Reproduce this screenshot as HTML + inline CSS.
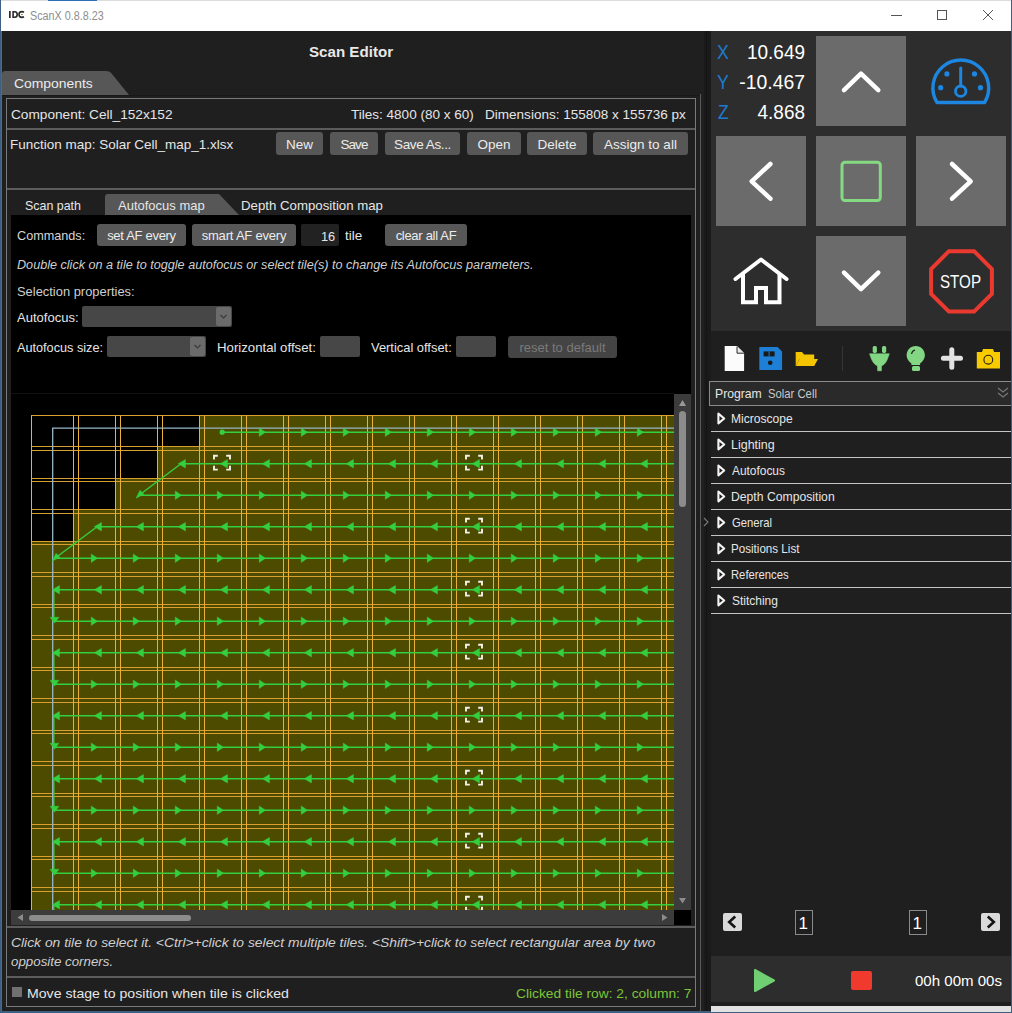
<!DOCTYPE html>
<html><head><meta charset="utf-8">
<style>
*{box-sizing:border-box;margin:0;padding:0}
html,body{width:1012px;height:1013px;overflow:hidden;background:#1f1f1f;font-family:"Liberation Sans",sans-serif;color:#e6e6e6}
.a{position:absolute}
.t{position:absolute;white-space:nowrap;line-height:1}
.btn{position:absolute;background:#575757;border-radius:3px;color:#ececec;font-size:13.5px;text-align:center;white-space:nowrap;padding-top:1px}
</style></head><body>
<!-- window frame -->
<div class="a" style="left:0;top:0;width:1012px;height:31px;background:#fff"></div>
<div class="a" style="left:0;top:0;width:1012px;height:1px;background:#dcdcdc"></div>
<div class="a" style="left:48px;top:0;width:49px;height:1px;background:#2f6fb8"></div>
<div class="a" style="left:0;top:0;width:1px;height:1013px;background:#3d5f80"></div>
<div class="a" style="left:1px;top:31px;width:1px;height:982px;background:#4a6b8a"></div>
<div class="a" style="left:1011px;top:0;width:1px;height:1013px;background:#3d5f80"></div>
<div class="a" style="left:0;top:1011px;width:1012px;height:2px;background:#3d5f80"></div>
<!-- title -->
<svg class="a" style="left:8px;top:9px" width="20" height="12" viewBox="8 9 20 12"><rect x="9" y="11" width="1.7" height="7" fill="#2a2a2a"/><path d="M13.1 11.8H14.8Q17.2 11.8 17.2 14.5Q17.2 17.2 14.8 17.2H13.1Z" fill="none" stroke="#2a2a2a" stroke-width="1.6"/><path d="M24 12.2Q23 11.6 22 11.6Q19 11.6 19 14.5Q19 17.4 22 17.4Q23 17.4 24 16.8" fill="none" stroke="#2a2a2a" stroke-width="1.6"/><path d="M21 14.5H23" stroke="#c08040" stroke-width="1"/></svg>
<div class="t" style="left:30.00px;top:9.7px;font-size:12px;color:#8e8e8e;transform:scaleX(0.8982);transform-origin:0 0">ScanX 0.8.8.23</div>
<div class="a" style="left:891px;top:15px;width:11px;height:1px;background:#555"></div>
<div class="a" style="left:937px;top:10px;width:10px;height:10px;border:1px solid #555"></div>
<svg class="a" style="left:982px;top:9px" width="12" height="12" viewBox="0 0 12 12"><path d="M1 1L11 11M11 1L1 11" stroke="#555" stroke-width="1"/></svg>

<!-- LEFT PANEL -->
<div class="t" style="left:309.00px;top:44px;font-size:15.5px;font-weight:bold;color:#e8e8e8;transform:scaleX(0.9757);transform-origin:0 0">Scan Editor</div>
<!-- components tab -->
<svg class="a" style="left:2px;top:71px" width="130" height="25" viewBox="0 0 130 25"><path d="M0 24V3Q0 0 3 0H104Q108 0 110 3L127 24z" fill="#575757"/></svg>
<div class="t" style="left:14.00px;top:77px;font-size:13.5px;color:#ececec;transform:scaleX(1.0287);transform-origin:0 0">Components</div>
<div class="a" style="left:2px;top:95px;width:699px;height:1px;background:#181818"></div>
<div class="a" style="left:700px;top:94px;width:1px;height:918px;background:#5a5a5a"></div>
<!-- outer box -->
<div class="a" style="left:6px;top:98px;width:690px;height:909px;border:1px solid #7a7a7a"></div>
<div class="a" style="left:7px;top:128px;width:688px;height:2px;background:#5c5c5c"></div>
<div class="a" style="left:7px;top:188px;width:688px;height:2px;background:#5c5c5c"></div>
<div class="a" style="left:7px;top:926px;width:688px;height:2px;background:#5c5c5c"></div>
<div class="a" style="left:7px;top:976px;width:688px;height:2px;background:#5c5c5c"></div>

<div class="t" style="left:11.00px;top:108px;font-size:13.5px;transform:scaleX(1.0104);transform-origin:0 0">Component: Cell_152x152</div>
<div class="t" style="left:351.00px;top:108px;font-size:13.5px;transform:scaleX(1.0017);transform-origin:0 0">Tiles: 4800 (80 x 60)&nbsp;&nbsp; Dimensions: 155808 x 155736 px</div>
<div class="t" style="left:10.00px;top:137.5px;font-size:13.5px;transform:scaleX(0.9984);transform-origin:0 0">Function map: Solar Cell_map_1.xlsx</div>
<div class="btn" style="left:276px;top:132px;width:47px;height:23px;line-height:23px">New</div>
<div class="btn" style="left:330px;top:132px;width:48px;height:23px;line-height:23px;letter-spacing:-0.9px">Save</div>
<div class="btn" style="left:385px;top:132px;width:75px;height:23px;line-height:23px;letter-spacing:-0.4px">Save As...</div>
<div class="btn" style="left:467px;top:132px;width:54px;height:23px;line-height:23px">Open</div>
<div class="btn" style="left:527px;top:132px;width:60px;height:23px;line-height:23px">Delete</div>
<div class="btn" style="left:593px;top:132px;width:95px;height:23px;line-height:23px">Assign to all</div>

<!-- inner tabs -->
<svg class="a" style="left:105px;top:194px" width="140" height="21" viewBox="0 0 140 21"><path d="M0 21V3Q0 0 3 0H114L134 21z" fill="#575757"/></svg>
<div class="t" style="left:24.50px;top:199px;font-size:13px;transform:scaleX(0.9552);transform-origin:0 0">Scan path</div>
<div class="t" style="left:117.80px;top:199px;font-size:13px;transform:scaleX(1.0002);transform-origin:0 0">Autofocus map</div>
<div class="t" style="left:240.88px;top:199px;font-size:13px;transform:scaleX(1.0179);transform-origin:0 0">Depth Composition map</div>
<!-- black content -->
<div class="a" style="left:11px;top:215px;width:680px;height:710px;background:#000"></div>
<div class="t" style="left:16.60px;top:229px;font-size:13px;color:#d6d6d6;transform:scaleX(0.9731);transform-origin:0 0">Commands:</div>
<div class="btn" style="left:97px;top:224px;width:89px;height:22px;line-height:22px;font-size:13px;letter-spacing:-0.3px">set AF every</div>
<div class="btn" style="left:192px;top:224px;width:104px;height:22px;line-height:22px;font-size:13px;letter-spacing:-0.2px">smart AF every</div>
<div class="a" style="left:301px;top:224px;width:38px;height:22px;background:#222;border-radius:2px"></div>
<div class="t" style="left:321.00px;top:230px;font-size:13px;transform:scaleX(0.9838);transform-origin:0 0">16</div>
<div class="t" style="left:345.00px;top:229px;font-size:13px;transform:scaleX(1.0373);transform-origin:0 0">tile</div>
<div class="btn" style="left:385px;top:224px;width:82px;height:22px;line-height:22px;font-size:13px;letter-spacing:-0.3px">clear all AF</div>
<div class="t" style="left:16.60px;top:259px;font-size:12.5px;font-style:italic;color:#cfcfcf;transform:scaleX(1.0094);transform-origin:0 0">Double click on a tile to toggle autofocus or select tile(s) to change its Autofocus parameters.</div>
<div class="t" style="left:16.60px;top:285px;font-size:13px;color:#cfcfcf;transform:scaleX(0.9924);transform-origin:0 0">Selection properties:</div>
<div class="t" style="left:16.60px;top:311px;font-size:13px;transform:scaleX(1.0014);transform-origin:0 0">Autofocus:</div>
<div class="a" style="left:82px;top:306px;width:150px;height:21px;background:#474747;border-radius:2px"></div>
<div class="a" style="left:216px;top:307px;width:15px;height:19px;background:#6b6b6b;border-radius:2px"></div>
<svg class="a" style="left:216px;top:307px" width="15" height="19"><path d="M4.5 8L7.5 11L10.5 8" fill="none" stroke="#3a3a3a" stroke-width="1.2"/></svg>
<div class="t" style="left:16.60px;top:341px;font-size:13px;transform:scaleX(0.9755);transform-origin:0 0">Autofocus size:</div>
<div class="a" style="left:107px;top:336px;width:99px;height:21px;background:#474747;border-radius:2px"></div>
<div class="a" style="left:190px;top:337px;width:15px;height:19px;background:#6b6b6b;border-radius:2px"></div>
<svg class="a" style="left:190px;top:337px" width="15" height="19"><path d="M4.5 8L7.5 11L10.5 8" fill="none" stroke="#3a3a3a" stroke-width="1.2"/></svg>
<div class="t" style="left:216.78px;top:341px;font-size:13px;transform:scaleX(1.0157);transform-origin:0 0">Horizontal offset:</div>
<div class="a" style="left:320px;top:336px;width:40px;height:21px;background:#474747;border-radius:2px"></div>
<div class="t" style="left:370.90px;top:341px;font-size:13px;transform:scaleX(0.9913);transform-origin:0 0">Vertical offset:</div>
<div class="a" style="left:456px;top:336px;width:40px;height:21px;background:#474747;border-radius:2px"></div>
<div class="btn" style="left:508px;top:336px;width:109px;height:22px;line-height:22px;font-size:13px;background:#444;color:#7a7a7a">reset to default</div>

<svg width="663" height="516" viewBox="11 394 663 516" style="position:absolute;left:11px;top:394px;display:block">
<rect x="11" y="394" width="663" height="516" fill="#000"/>
<rect x="199.0" y="415" width="48.0" height="36.0" fill="#4d4b00"/>
<rect x="241.0" y="415" width="48.0" height="36.0" fill="#4d4b00"/>
<rect x="283.0" y="415" width="48.0" height="36.0" fill="#4d4b00"/>
<rect x="325.0" y="415" width="48.0" height="36.0" fill="#4d4b00"/>
<rect x="367.0" y="415" width="48.0" height="36.0" fill="#4d4b00"/>
<rect x="409.0" y="415" width="48.0" height="36.0" fill="#4d4b00"/>
<rect x="451.0" y="415" width="48.0" height="36.0" fill="#4d4b00"/>
<rect x="493.0" y="415" width="48.0" height="36.0" fill="#4d4b00"/>
<rect x="535.0" y="415" width="48.0" height="36.0" fill="#4d4b00"/>
<rect x="577.0" y="415" width="48.0" height="36.0" fill="#4d4b00"/>
<rect x="619.0" y="415" width="48.0" height="36.0" fill="#4d4b00"/>
<rect x="661.0" y="415" width="48.0" height="36.0" fill="#4d4b00"/>
<rect x="157.0" y="446" width="48.0" height="36.0" fill="#4d4b00"/>
<rect x="199.0" y="446" width="48.0" height="36.0" fill="#4d4b00"/>
<rect x="241.0" y="446" width="48.0" height="36.0" fill="#4d4b00"/>
<rect x="283.0" y="446" width="48.0" height="36.0" fill="#4d4b00"/>
<rect x="325.0" y="446" width="48.0" height="36.0" fill="#4d4b00"/>
<rect x="367.0" y="446" width="48.0" height="36.0" fill="#4d4b00"/>
<rect x="409.0" y="446" width="48.0" height="36.0" fill="#4d4b00"/>
<rect x="451.0" y="446" width="48.0" height="36.0" fill="#4d4b00"/>
<rect x="493.0" y="446" width="48.0" height="36.0" fill="#4d4b00"/>
<rect x="535.0" y="446" width="48.0" height="36.0" fill="#4d4b00"/>
<rect x="577.0" y="446" width="48.0" height="36.0" fill="#4d4b00"/>
<rect x="619.0" y="446" width="48.0" height="36.0" fill="#4d4b00"/>
<rect x="661.0" y="446" width="48.0" height="36.0" fill="#4d4b00"/>
<rect x="115.0" y="478" width="48.0" height="36.0" fill="#4d4b00"/>
<rect x="157.0" y="478" width="48.0" height="36.0" fill="#4d4b00"/>
<rect x="199.0" y="478" width="48.0" height="36.0" fill="#4d4b00"/>
<rect x="241.0" y="478" width="48.0" height="36.0" fill="#4d4b00"/>
<rect x="283.0" y="478" width="48.0" height="36.0" fill="#4d4b00"/>
<rect x="325.0" y="478" width="48.0" height="36.0" fill="#4d4b00"/>
<rect x="367.0" y="478" width="48.0" height="36.0" fill="#4d4b00"/>
<rect x="409.0" y="478" width="48.0" height="36.0" fill="#4d4b00"/>
<rect x="451.0" y="478" width="48.0" height="36.0" fill="#4d4b00"/>
<rect x="493.0" y="478" width="48.0" height="36.0" fill="#4d4b00"/>
<rect x="535.0" y="478" width="48.0" height="36.0" fill="#4d4b00"/>
<rect x="577.0" y="478" width="48.0" height="36.0" fill="#4d4b00"/>
<rect x="619.0" y="478" width="48.0" height="36.0" fill="#4d4b00"/>
<rect x="661.0" y="478" width="48.0" height="36.0" fill="#4d4b00"/>
<rect x="73.0" y="509" width="48.0" height="36.0" fill="#4d4b00"/>
<rect x="115.0" y="509" width="48.0" height="36.0" fill="#4d4b00"/>
<rect x="157.0" y="509" width="48.0" height="36.0" fill="#4d4b00"/>
<rect x="199.0" y="509" width="48.0" height="36.0" fill="#4d4b00"/>
<rect x="241.0" y="509" width="48.0" height="36.0" fill="#4d4b00"/>
<rect x="283.0" y="509" width="48.0" height="36.0" fill="#4d4b00"/>
<rect x="325.0" y="509" width="48.0" height="36.0" fill="#4d4b00"/>
<rect x="367.0" y="509" width="48.0" height="36.0" fill="#4d4b00"/>
<rect x="409.0" y="509" width="48.0" height="36.0" fill="#4d4b00"/>
<rect x="451.0" y="509" width="48.0" height="36.0" fill="#4d4b00"/>
<rect x="493.0" y="509" width="48.0" height="36.0" fill="#4d4b00"/>
<rect x="535.0" y="509" width="48.0" height="36.0" fill="#4d4b00"/>
<rect x="577.0" y="509" width="48.0" height="36.0" fill="#4d4b00"/>
<rect x="619.0" y="509" width="48.0" height="36.0" fill="#4d4b00"/>
<rect x="661.0" y="509" width="48.0" height="36.0" fill="#4d4b00"/>
<rect x="31.0" y="541" width="48.0" height="36.0" fill="#4d4b00"/>
<rect x="73.0" y="541" width="48.0" height="36.0" fill="#4d4b00"/>
<rect x="115.0" y="541" width="48.0" height="36.0" fill="#4d4b00"/>
<rect x="157.0" y="541" width="48.0" height="36.0" fill="#4d4b00"/>
<rect x="199.0" y="541" width="48.0" height="36.0" fill="#4d4b00"/>
<rect x="241.0" y="541" width="48.0" height="36.0" fill="#4d4b00"/>
<rect x="283.0" y="541" width="48.0" height="36.0" fill="#4d4b00"/>
<rect x="325.0" y="541" width="48.0" height="36.0" fill="#4d4b00"/>
<rect x="367.0" y="541" width="48.0" height="36.0" fill="#4d4b00"/>
<rect x="409.0" y="541" width="48.0" height="36.0" fill="#4d4b00"/>
<rect x="451.0" y="541" width="48.0" height="36.0" fill="#4d4b00"/>
<rect x="493.0" y="541" width="48.0" height="36.0" fill="#4d4b00"/>
<rect x="535.0" y="541" width="48.0" height="36.0" fill="#4d4b00"/>
<rect x="577.0" y="541" width="48.0" height="36.0" fill="#4d4b00"/>
<rect x="619.0" y="541" width="48.0" height="36.0" fill="#4d4b00"/>
<rect x="661.0" y="541" width="48.0" height="36.0" fill="#4d4b00"/>
<rect x="31.0" y="572" width="48.0" height="36.0" fill="#4d4b00"/>
<rect x="73.0" y="572" width="48.0" height="36.0" fill="#4d4b00"/>
<rect x="115.0" y="572" width="48.0" height="36.0" fill="#4d4b00"/>
<rect x="157.0" y="572" width="48.0" height="36.0" fill="#4d4b00"/>
<rect x="199.0" y="572" width="48.0" height="36.0" fill="#4d4b00"/>
<rect x="241.0" y="572" width="48.0" height="36.0" fill="#4d4b00"/>
<rect x="283.0" y="572" width="48.0" height="36.0" fill="#4d4b00"/>
<rect x="325.0" y="572" width="48.0" height="36.0" fill="#4d4b00"/>
<rect x="367.0" y="572" width="48.0" height="36.0" fill="#4d4b00"/>
<rect x="409.0" y="572" width="48.0" height="36.0" fill="#4d4b00"/>
<rect x="451.0" y="572" width="48.0" height="36.0" fill="#4d4b00"/>
<rect x="493.0" y="572" width="48.0" height="36.0" fill="#4d4b00"/>
<rect x="535.0" y="572" width="48.0" height="36.0" fill="#4d4b00"/>
<rect x="577.0" y="572" width="48.0" height="36.0" fill="#4d4b00"/>
<rect x="619.0" y="572" width="48.0" height="36.0" fill="#4d4b00"/>
<rect x="661.0" y="572" width="48.0" height="36.0" fill="#4d4b00"/>
<rect x="31.0" y="604" width="48.0" height="36.0" fill="#4d4b00"/>
<rect x="73.0" y="604" width="48.0" height="36.0" fill="#4d4b00"/>
<rect x="115.0" y="604" width="48.0" height="36.0" fill="#4d4b00"/>
<rect x="157.0" y="604" width="48.0" height="36.0" fill="#4d4b00"/>
<rect x="199.0" y="604" width="48.0" height="36.0" fill="#4d4b00"/>
<rect x="241.0" y="604" width="48.0" height="36.0" fill="#4d4b00"/>
<rect x="283.0" y="604" width="48.0" height="36.0" fill="#4d4b00"/>
<rect x="325.0" y="604" width="48.0" height="36.0" fill="#4d4b00"/>
<rect x="367.0" y="604" width="48.0" height="36.0" fill="#4d4b00"/>
<rect x="409.0" y="604" width="48.0" height="36.0" fill="#4d4b00"/>
<rect x="451.0" y="604" width="48.0" height="36.0" fill="#4d4b00"/>
<rect x="493.0" y="604" width="48.0" height="36.0" fill="#4d4b00"/>
<rect x="535.0" y="604" width="48.0" height="36.0" fill="#4d4b00"/>
<rect x="577.0" y="604" width="48.0" height="36.0" fill="#4d4b00"/>
<rect x="619.0" y="604" width="48.0" height="36.0" fill="#4d4b00"/>
<rect x="661.0" y="604" width="48.0" height="36.0" fill="#4d4b00"/>
<rect x="31.0" y="635" width="48.0" height="36.0" fill="#4d4b00"/>
<rect x="73.0" y="635" width="48.0" height="36.0" fill="#4d4b00"/>
<rect x="115.0" y="635" width="48.0" height="36.0" fill="#4d4b00"/>
<rect x="157.0" y="635" width="48.0" height="36.0" fill="#4d4b00"/>
<rect x="199.0" y="635" width="48.0" height="36.0" fill="#4d4b00"/>
<rect x="241.0" y="635" width="48.0" height="36.0" fill="#4d4b00"/>
<rect x="283.0" y="635" width="48.0" height="36.0" fill="#4d4b00"/>
<rect x="325.0" y="635" width="48.0" height="36.0" fill="#4d4b00"/>
<rect x="367.0" y="635" width="48.0" height="36.0" fill="#4d4b00"/>
<rect x="409.0" y="635" width="48.0" height="36.0" fill="#4d4b00"/>
<rect x="451.0" y="635" width="48.0" height="36.0" fill="#4d4b00"/>
<rect x="493.0" y="635" width="48.0" height="36.0" fill="#4d4b00"/>
<rect x="535.0" y="635" width="48.0" height="36.0" fill="#4d4b00"/>
<rect x="577.0" y="635" width="48.0" height="36.0" fill="#4d4b00"/>
<rect x="619.0" y="635" width="48.0" height="36.0" fill="#4d4b00"/>
<rect x="661.0" y="635" width="48.0" height="36.0" fill="#4d4b00"/>
<rect x="31.0" y="667" width="48.0" height="36.0" fill="#4d4b00"/>
<rect x="73.0" y="667" width="48.0" height="36.0" fill="#4d4b00"/>
<rect x="115.0" y="667" width="48.0" height="36.0" fill="#4d4b00"/>
<rect x="157.0" y="667" width="48.0" height="36.0" fill="#4d4b00"/>
<rect x="199.0" y="667" width="48.0" height="36.0" fill="#4d4b00"/>
<rect x="241.0" y="667" width="48.0" height="36.0" fill="#4d4b00"/>
<rect x="283.0" y="667" width="48.0" height="36.0" fill="#4d4b00"/>
<rect x="325.0" y="667" width="48.0" height="36.0" fill="#4d4b00"/>
<rect x="367.0" y="667" width="48.0" height="36.0" fill="#4d4b00"/>
<rect x="409.0" y="667" width="48.0" height="36.0" fill="#4d4b00"/>
<rect x="451.0" y="667" width="48.0" height="36.0" fill="#4d4b00"/>
<rect x="493.0" y="667" width="48.0" height="36.0" fill="#4d4b00"/>
<rect x="535.0" y="667" width="48.0" height="36.0" fill="#4d4b00"/>
<rect x="577.0" y="667" width="48.0" height="36.0" fill="#4d4b00"/>
<rect x="619.0" y="667" width="48.0" height="36.0" fill="#4d4b00"/>
<rect x="661.0" y="667" width="48.0" height="36.0" fill="#4d4b00"/>
<rect x="31.0" y="698" width="48.0" height="36.0" fill="#4d4b00"/>
<rect x="73.0" y="698" width="48.0" height="36.0" fill="#4d4b00"/>
<rect x="115.0" y="698" width="48.0" height="36.0" fill="#4d4b00"/>
<rect x="157.0" y="698" width="48.0" height="36.0" fill="#4d4b00"/>
<rect x="199.0" y="698" width="48.0" height="36.0" fill="#4d4b00"/>
<rect x="241.0" y="698" width="48.0" height="36.0" fill="#4d4b00"/>
<rect x="283.0" y="698" width="48.0" height="36.0" fill="#4d4b00"/>
<rect x="325.0" y="698" width="48.0" height="36.0" fill="#4d4b00"/>
<rect x="367.0" y="698" width="48.0" height="36.0" fill="#4d4b00"/>
<rect x="409.0" y="698" width="48.0" height="36.0" fill="#4d4b00"/>
<rect x="451.0" y="698" width="48.0" height="36.0" fill="#4d4b00"/>
<rect x="493.0" y="698" width="48.0" height="36.0" fill="#4d4b00"/>
<rect x="535.0" y="698" width="48.0" height="36.0" fill="#4d4b00"/>
<rect x="577.0" y="698" width="48.0" height="36.0" fill="#4d4b00"/>
<rect x="619.0" y="698" width="48.0" height="36.0" fill="#4d4b00"/>
<rect x="661.0" y="698" width="48.0" height="36.0" fill="#4d4b00"/>
<rect x="31.0" y="730" width="48.0" height="36.0" fill="#4d4b00"/>
<rect x="73.0" y="730" width="48.0" height="36.0" fill="#4d4b00"/>
<rect x="115.0" y="730" width="48.0" height="36.0" fill="#4d4b00"/>
<rect x="157.0" y="730" width="48.0" height="36.0" fill="#4d4b00"/>
<rect x="199.0" y="730" width="48.0" height="36.0" fill="#4d4b00"/>
<rect x="241.0" y="730" width="48.0" height="36.0" fill="#4d4b00"/>
<rect x="283.0" y="730" width="48.0" height="36.0" fill="#4d4b00"/>
<rect x="325.0" y="730" width="48.0" height="36.0" fill="#4d4b00"/>
<rect x="367.0" y="730" width="48.0" height="36.0" fill="#4d4b00"/>
<rect x="409.0" y="730" width="48.0" height="36.0" fill="#4d4b00"/>
<rect x="451.0" y="730" width="48.0" height="36.0" fill="#4d4b00"/>
<rect x="493.0" y="730" width="48.0" height="36.0" fill="#4d4b00"/>
<rect x="535.0" y="730" width="48.0" height="36.0" fill="#4d4b00"/>
<rect x="577.0" y="730" width="48.0" height="36.0" fill="#4d4b00"/>
<rect x="619.0" y="730" width="48.0" height="36.0" fill="#4d4b00"/>
<rect x="661.0" y="730" width="48.0" height="36.0" fill="#4d4b00"/>
<rect x="31.0" y="761" width="48.0" height="36.0" fill="#4d4b00"/>
<rect x="73.0" y="761" width="48.0" height="36.0" fill="#4d4b00"/>
<rect x="115.0" y="761" width="48.0" height="36.0" fill="#4d4b00"/>
<rect x="157.0" y="761" width="48.0" height="36.0" fill="#4d4b00"/>
<rect x="199.0" y="761" width="48.0" height="36.0" fill="#4d4b00"/>
<rect x="241.0" y="761" width="48.0" height="36.0" fill="#4d4b00"/>
<rect x="283.0" y="761" width="48.0" height="36.0" fill="#4d4b00"/>
<rect x="325.0" y="761" width="48.0" height="36.0" fill="#4d4b00"/>
<rect x="367.0" y="761" width="48.0" height="36.0" fill="#4d4b00"/>
<rect x="409.0" y="761" width="48.0" height="36.0" fill="#4d4b00"/>
<rect x="451.0" y="761" width="48.0" height="36.0" fill="#4d4b00"/>
<rect x="493.0" y="761" width="48.0" height="36.0" fill="#4d4b00"/>
<rect x="535.0" y="761" width="48.0" height="36.0" fill="#4d4b00"/>
<rect x="577.0" y="761" width="48.0" height="36.0" fill="#4d4b00"/>
<rect x="619.0" y="761" width="48.0" height="36.0" fill="#4d4b00"/>
<rect x="661.0" y="761" width="48.0" height="36.0" fill="#4d4b00"/>
<rect x="31.0" y="793" width="48.0" height="36.0" fill="#4d4b00"/>
<rect x="73.0" y="793" width="48.0" height="36.0" fill="#4d4b00"/>
<rect x="115.0" y="793" width="48.0" height="36.0" fill="#4d4b00"/>
<rect x="157.0" y="793" width="48.0" height="36.0" fill="#4d4b00"/>
<rect x="199.0" y="793" width="48.0" height="36.0" fill="#4d4b00"/>
<rect x="241.0" y="793" width="48.0" height="36.0" fill="#4d4b00"/>
<rect x="283.0" y="793" width="48.0" height="36.0" fill="#4d4b00"/>
<rect x="325.0" y="793" width="48.0" height="36.0" fill="#4d4b00"/>
<rect x="367.0" y="793" width="48.0" height="36.0" fill="#4d4b00"/>
<rect x="409.0" y="793" width="48.0" height="36.0" fill="#4d4b00"/>
<rect x="451.0" y="793" width="48.0" height="36.0" fill="#4d4b00"/>
<rect x="493.0" y="793" width="48.0" height="36.0" fill="#4d4b00"/>
<rect x="535.0" y="793" width="48.0" height="36.0" fill="#4d4b00"/>
<rect x="577.0" y="793" width="48.0" height="36.0" fill="#4d4b00"/>
<rect x="619.0" y="793" width="48.0" height="36.0" fill="#4d4b00"/>
<rect x="661.0" y="793" width="48.0" height="36.0" fill="#4d4b00"/>
<rect x="31.0" y="824" width="48.0" height="36.0" fill="#4d4b00"/>
<rect x="73.0" y="824" width="48.0" height="36.0" fill="#4d4b00"/>
<rect x="115.0" y="824" width="48.0" height="36.0" fill="#4d4b00"/>
<rect x="157.0" y="824" width="48.0" height="36.0" fill="#4d4b00"/>
<rect x="199.0" y="824" width="48.0" height="36.0" fill="#4d4b00"/>
<rect x="241.0" y="824" width="48.0" height="36.0" fill="#4d4b00"/>
<rect x="283.0" y="824" width="48.0" height="36.0" fill="#4d4b00"/>
<rect x="325.0" y="824" width="48.0" height="36.0" fill="#4d4b00"/>
<rect x="367.0" y="824" width="48.0" height="36.0" fill="#4d4b00"/>
<rect x="409.0" y="824" width="48.0" height="36.0" fill="#4d4b00"/>
<rect x="451.0" y="824" width="48.0" height="36.0" fill="#4d4b00"/>
<rect x="493.0" y="824" width="48.0" height="36.0" fill="#4d4b00"/>
<rect x="535.0" y="824" width="48.0" height="36.0" fill="#4d4b00"/>
<rect x="577.0" y="824" width="48.0" height="36.0" fill="#4d4b00"/>
<rect x="619.0" y="824" width="48.0" height="36.0" fill="#4d4b00"/>
<rect x="661.0" y="824" width="48.0" height="36.0" fill="#4d4b00"/>
<rect x="31.0" y="856" width="48.0" height="36.0" fill="#4d4b00"/>
<rect x="73.0" y="856" width="48.0" height="36.0" fill="#4d4b00"/>
<rect x="115.0" y="856" width="48.0" height="36.0" fill="#4d4b00"/>
<rect x="157.0" y="856" width="48.0" height="36.0" fill="#4d4b00"/>
<rect x="199.0" y="856" width="48.0" height="36.0" fill="#4d4b00"/>
<rect x="241.0" y="856" width="48.0" height="36.0" fill="#4d4b00"/>
<rect x="283.0" y="856" width="48.0" height="36.0" fill="#4d4b00"/>
<rect x="325.0" y="856" width="48.0" height="36.0" fill="#4d4b00"/>
<rect x="367.0" y="856" width="48.0" height="36.0" fill="#4d4b00"/>
<rect x="409.0" y="856" width="48.0" height="36.0" fill="#4d4b00"/>
<rect x="451.0" y="856" width="48.0" height="36.0" fill="#4d4b00"/>
<rect x="493.0" y="856" width="48.0" height="36.0" fill="#4d4b00"/>
<rect x="535.0" y="856" width="48.0" height="36.0" fill="#4d4b00"/>
<rect x="577.0" y="856" width="48.0" height="36.0" fill="#4d4b00"/>
<rect x="619.0" y="856" width="48.0" height="36.0" fill="#4d4b00"/>
<rect x="661.0" y="856" width="48.0" height="36.0" fill="#4d4b00"/>
<rect x="31.0" y="887" width="48.0" height="36.0" fill="#4d4b00"/>
<rect x="73.0" y="887" width="48.0" height="36.0" fill="#4d4b00"/>
<rect x="115.0" y="887" width="48.0" height="36.0" fill="#4d4b00"/>
<rect x="157.0" y="887" width="48.0" height="36.0" fill="#4d4b00"/>
<rect x="199.0" y="887" width="48.0" height="36.0" fill="#4d4b00"/>
<rect x="241.0" y="887" width="48.0" height="36.0" fill="#4d4b00"/>
<rect x="283.0" y="887" width="48.0" height="36.0" fill="#4d4b00"/>
<rect x="325.0" y="887" width="48.0" height="36.0" fill="#4d4b00"/>
<rect x="367.0" y="887" width="48.0" height="36.0" fill="#4d4b00"/>
<rect x="409.0" y="887" width="48.0" height="36.0" fill="#4d4b00"/>
<rect x="451.0" y="887" width="48.0" height="36.0" fill="#4d4b00"/>
<rect x="493.0" y="887" width="48.0" height="36.0" fill="#4d4b00"/>
<rect x="535.0" y="887" width="48.0" height="36.0" fill="#4d4b00"/>
<rect x="577.0" y="887" width="48.0" height="36.0" fill="#4d4b00"/>
<rect x="619.0" y="887" width="48.0" height="36.0" fill="#4d4b00"/>
<rect x="661.0" y="887" width="48.0" height="36.0" fill="#4d4b00"/>
<path d="M31.0 415.5h48.0M31.0 450.5h48.0M73.0 415.5h48.0M73.0 450.5h48.0M115.0 415.5h48.0M115.0 450.5h48.0M157.0 415.5h48.0M157.0 450.5h48.0M199.0 415.5h48.0M199.0 450.5h48.0M241.0 415.5h48.0M241.0 450.5h48.0M283.0 415.5h48.0M283.0 450.5h48.0M325.0 415.5h48.0M325.0 450.5h48.0M367.0 415.5h48.0M367.0 450.5h48.0M409.0 415.5h48.0M409.0 450.5h48.0M451.0 415.5h48.0M451.0 450.5h48.0M493.0 415.5h48.0M493.0 450.5h48.0M535.0 415.5h48.0M535.0 450.5h48.0M577.0 415.5h48.0M577.0 450.5h48.0M619.0 415.5h48.0M619.0 450.5h48.0M661.0 415.5h48.0M661.0 450.5h48.0M31.0 446.5h48.0M31.0 481.5h48.0M73.0 446.5h48.0M73.0 481.5h48.0M115.0 446.5h48.0M115.0 481.5h48.0M157.0 446.5h48.0M157.0 481.5h48.0M199.0 446.5h48.0M199.0 481.5h48.0M241.0 446.5h48.0M241.0 481.5h48.0M283.0 446.5h48.0M283.0 481.5h48.0M325.0 446.5h48.0M325.0 481.5h48.0M367.0 446.5h48.0M367.0 481.5h48.0M409.0 446.5h48.0M409.0 481.5h48.0M451.0 446.5h48.0M451.0 481.5h48.0M493.0 446.5h48.0M493.0 481.5h48.0M535.0 446.5h48.0M535.0 481.5h48.0M577.0 446.5h48.0M577.0 481.5h48.0M619.0 446.5h48.0M619.0 481.5h48.0M661.0 446.5h48.0M661.0 481.5h48.0M31.0 478.5h48.0M31.0 513.5h48.0M73.0 478.5h48.0M73.0 513.5h48.0M115.0 478.5h48.0M115.0 513.5h48.0M157.0 478.5h48.0M157.0 513.5h48.0M199.0 478.5h48.0M199.0 513.5h48.0M241.0 478.5h48.0M241.0 513.5h48.0M283.0 478.5h48.0M283.0 513.5h48.0M325.0 478.5h48.0M325.0 513.5h48.0M367.0 478.5h48.0M367.0 513.5h48.0M409.0 478.5h48.0M409.0 513.5h48.0M451.0 478.5h48.0M451.0 513.5h48.0M493.0 478.5h48.0M493.0 513.5h48.0M535.0 478.5h48.0M535.0 513.5h48.0M577.0 478.5h48.0M577.0 513.5h48.0M619.0 478.5h48.0M619.0 513.5h48.0M661.0 478.5h48.0M661.0 513.5h48.0M31.0 509.5h48.0M31.0 544.5h48.0M73.0 509.5h48.0M73.0 544.5h48.0M115.0 509.5h48.0M115.0 544.5h48.0M157.0 509.5h48.0M157.0 544.5h48.0M199.0 509.5h48.0M199.0 544.5h48.0M241.0 509.5h48.0M241.0 544.5h48.0M283.0 509.5h48.0M283.0 544.5h48.0M325.0 509.5h48.0M325.0 544.5h48.0M367.0 509.5h48.0M367.0 544.5h48.0M409.0 509.5h48.0M409.0 544.5h48.0M451.0 509.5h48.0M451.0 544.5h48.0M493.0 509.5h48.0M493.0 544.5h48.0M535.0 509.5h48.0M535.0 544.5h48.0M577.0 509.5h48.0M577.0 544.5h48.0M619.0 509.5h48.0M619.0 544.5h48.0M661.0 509.5h48.0M661.0 544.5h48.0M31.0 541.5h48.0M31.0 576.5h48.0M73.0 541.5h48.0M73.0 576.5h48.0M115.0 541.5h48.0M115.0 576.5h48.0M157.0 541.5h48.0M157.0 576.5h48.0M199.0 541.5h48.0M199.0 576.5h48.0M241.0 541.5h48.0M241.0 576.5h48.0M283.0 541.5h48.0M283.0 576.5h48.0M325.0 541.5h48.0M325.0 576.5h48.0M367.0 541.5h48.0M367.0 576.5h48.0M409.0 541.5h48.0M409.0 576.5h48.0M451.0 541.5h48.0M451.0 576.5h48.0M493.0 541.5h48.0M493.0 576.5h48.0M535.0 541.5h48.0M535.0 576.5h48.0M577.0 541.5h48.0M577.0 576.5h48.0M619.0 541.5h48.0M619.0 576.5h48.0M661.0 541.5h48.0M661.0 576.5h48.0M31.0 572.5h48.0M31.0 607.5h48.0M73.0 572.5h48.0M73.0 607.5h48.0M115.0 572.5h48.0M115.0 607.5h48.0M157.0 572.5h48.0M157.0 607.5h48.0M199.0 572.5h48.0M199.0 607.5h48.0M241.0 572.5h48.0M241.0 607.5h48.0M283.0 572.5h48.0M283.0 607.5h48.0M325.0 572.5h48.0M325.0 607.5h48.0M367.0 572.5h48.0M367.0 607.5h48.0M409.0 572.5h48.0M409.0 607.5h48.0M451.0 572.5h48.0M451.0 607.5h48.0M493.0 572.5h48.0M493.0 607.5h48.0M535.0 572.5h48.0M535.0 607.5h48.0M577.0 572.5h48.0M577.0 607.5h48.0M619.0 572.5h48.0M619.0 607.5h48.0M661.0 572.5h48.0M661.0 607.5h48.0M31.0 604.5h48.0M31.0 639.5h48.0M73.0 604.5h48.0M73.0 639.5h48.0M115.0 604.5h48.0M115.0 639.5h48.0M157.0 604.5h48.0M157.0 639.5h48.0M199.0 604.5h48.0M199.0 639.5h48.0M241.0 604.5h48.0M241.0 639.5h48.0M283.0 604.5h48.0M283.0 639.5h48.0M325.0 604.5h48.0M325.0 639.5h48.0M367.0 604.5h48.0M367.0 639.5h48.0M409.0 604.5h48.0M409.0 639.5h48.0M451.0 604.5h48.0M451.0 639.5h48.0M493.0 604.5h48.0M493.0 639.5h48.0M535.0 604.5h48.0M535.0 639.5h48.0M577.0 604.5h48.0M577.0 639.5h48.0M619.0 604.5h48.0M619.0 639.5h48.0M661.0 604.5h48.0M661.0 639.5h48.0M31.0 635.5h48.0M31.0 670.5h48.0M73.0 635.5h48.0M73.0 670.5h48.0M115.0 635.5h48.0M115.0 670.5h48.0M157.0 635.5h48.0M157.0 670.5h48.0M199.0 635.5h48.0M199.0 670.5h48.0M241.0 635.5h48.0M241.0 670.5h48.0M283.0 635.5h48.0M283.0 670.5h48.0M325.0 635.5h48.0M325.0 670.5h48.0M367.0 635.5h48.0M367.0 670.5h48.0M409.0 635.5h48.0M409.0 670.5h48.0M451.0 635.5h48.0M451.0 670.5h48.0M493.0 635.5h48.0M493.0 670.5h48.0M535.0 635.5h48.0M535.0 670.5h48.0M577.0 635.5h48.0M577.0 670.5h48.0M619.0 635.5h48.0M619.0 670.5h48.0M661.0 635.5h48.0M661.0 670.5h48.0M31.0 667.5h48.0M31.0 702.5h48.0M73.0 667.5h48.0M73.0 702.5h48.0M115.0 667.5h48.0M115.0 702.5h48.0M157.0 667.5h48.0M157.0 702.5h48.0M199.0 667.5h48.0M199.0 702.5h48.0M241.0 667.5h48.0M241.0 702.5h48.0M283.0 667.5h48.0M283.0 702.5h48.0M325.0 667.5h48.0M325.0 702.5h48.0M367.0 667.5h48.0M367.0 702.5h48.0M409.0 667.5h48.0M409.0 702.5h48.0M451.0 667.5h48.0M451.0 702.5h48.0M493.0 667.5h48.0M493.0 702.5h48.0M535.0 667.5h48.0M535.0 702.5h48.0M577.0 667.5h48.0M577.0 702.5h48.0M619.0 667.5h48.0M619.0 702.5h48.0M661.0 667.5h48.0M661.0 702.5h48.0M31.0 698.5h48.0M31.0 733.5h48.0M73.0 698.5h48.0M73.0 733.5h48.0M115.0 698.5h48.0M115.0 733.5h48.0M157.0 698.5h48.0M157.0 733.5h48.0M199.0 698.5h48.0M199.0 733.5h48.0M241.0 698.5h48.0M241.0 733.5h48.0M283.0 698.5h48.0M283.0 733.5h48.0M325.0 698.5h48.0M325.0 733.5h48.0M367.0 698.5h48.0M367.0 733.5h48.0M409.0 698.5h48.0M409.0 733.5h48.0M451.0 698.5h48.0M451.0 733.5h48.0M493.0 698.5h48.0M493.0 733.5h48.0M535.0 698.5h48.0M535.0 733.5h48.0M577.0 698.5h48.0M577.0 733.5h48.0M619.0 698.5h48.0M619.0 733.5h48.0M661.0 698.5h48.0M661.0 733.5h48.0M31.0 730.5h48.0M31.0 765.5h48.0M73.0 730.5h48.0M73.0 765.5h48.0M115.0 730.5h48.0M115.0 765.5h48.0M157.0 730.5h48.0M157.0 765.5h48.0M199.0 730.5h48.0M199.0 765.5h48.0M241.0 730.5h48.0M241.0 765.5h48.0M283.0 730.5h48.0M283.0 765.5h48.0M325.0 730.5h48.0M325.0 765.5h48.0M367.0 730.5h48.0M367.0 765.5h48.0M409.0 730.5h48.0M409.0 765.5h48.0M451.0 730.5h48.0M451.0 765.5h48.0M493.0 730.5h48.0M493.0 765.5h48.0M535.0 730.5h48.0M535.0 765.5h48.0M577.0 730.5h48.0M577.0 765.5h48.0M619.0 730.5h48.0M619.0 765.5h48.0M661.0 730.5h48.0M661.0 765.5h48.0M31.0 761.5h48.0M31.0 796.5h48.0M73.0 761.5h48.0M73.0 796.5h48.0M115.0 761.5h48.0M115.0 796.5h48.0M157.0 761.5h48.0M157.0 796.5h48.0M199.0 761.5h48.0M199.0 796.5h48.0M241.0 761.5h48.0M241.0 796.5h48.0M283.0 761.5h48.0M283.0 796.5h48.0M325.0 761.5h48.0M325.0 796.5h48.0M367.0 761.5h48.0M367.0 796.5h48.0M409.0 761.5h48.0M409.0 796.5h48.0M451.0 761.5h48.0M451.0 796.5h48.0M493.0 761.5h48.0M493.0 796.5h48.0M535.0 761.5h48.0M535.0 796.5h48.0M577.0 761.5h48.0M577.0 796.5h48.0M619.0 761.5h48.0M619.0 796.5h48.0M661.0 761.5h48.0M661.0 796.5h48.0M31.0 793.5h48.0M31.0 828.5h48.0M73.0 793.5h48.0M73.0 828.5h48.0M115.0 793.5h48.0M115.0 828.5h48.0M157.0 793.5h48.0M157.0 828.5h48.0M199.0 793.5h48.0M199.0 828.5h48.0M241.0 793.5h48.0M241.0 828.5h48.0M283.0 793.5h48.0M283.0 828.5h48.0M325.0 793.5h48.0M325.0 828.5h48.0M367.0 793.5h48.0M367.0 828.5h48.0M409.0 793.5h48.0M409.0 828.5h48.0M451.0 793.5h48.0M451.0 828.5h48.0M493.0 793.5h48.0M493.0 828.5h48.0M535.0 793.5h48.0M535.0 828.5h48.0M577.0 793.5h48.0M577.0 828.5h48.0M619.0 793.5h48.0M619.0 828.5h48.0M661.0 793.5h48.0M661.0 828.5h48.0M31.0 824.5h48.0M31.0 859.5h48.0M73.0 824.5h48.0M73.0 859.5h48.0M115.0 824.5h48.0M115.0 859.5h48.0M157.0 824.5h48.0M157.0 859.5h48.0M199.0 824.5h48.0M199.0 859.5h48.0M241.0 824.5h48.0M241.0 859.5h48.0M283.0 824.5h48.0M283.0 859.5h48.0M325.0 824.5h48.0M325.0 859.5h48.0M367.0 824.5h48.0M367.0 859.5h48.0M409.0 824.5h48.0M409.0 859.5h48.0M451.0 824.5h48.0M451.0 859.5h48.0M493.0 824.5h48.0M493.0 859.5h48.0M535.0 824.5h48.0M535.0 859.5h48.0M577.0 824.5h48.0M577.0 859.5h48.0M619.0 824.5h48.0M619.0 859.5h48.0M661.0 824.5h48.0M661.0 859.5h48.0M31.0 856.5h48.0M31.0 891.5h48.0M73.0 856.5h48.0M73.0 891.5h48.0M115.0 856.5h48.0M115.0 891.5h48.0M157.0 856.5h48.0M157.0 891.5h48.0M199.0 856.5h48.0M199.0 891.5h48.0M241.0 856.5h48.0M241.0 891.5h48.0M283.0 856.5h48.0M283.0 891.5h48.0M325.0 856.5h48.0M325.0 891.5h48.0M367.0 856.5h48.0M367.0 891.5h48.0M409.0 856.5h48.0M409.0 891.5h48.0M451.0 856.5h48.0M451.0 891.5h48.0M493.0 856.5h48.0M493.0 891.5h48.0M535.0 856.5h48.0M535.0 891.5h48.0M577.0 856.5h48.0M577.0 891.5h48.0M619.0 856.5h48.0M619.0 891.5h48.0M661.0 856.5h48.0M661.0 891.5h48.0M31.0 887.5h48.0M31.0 922.5h48.0M73.0 887.5h48.0M73.0 922.5h48.0M115.0 887.5h48.0M115.0 922.5h48.0M157.0 887.5h48.0M157.0 922.5h48.0M199.0 887.5h48.0M199.0 922.5h48.0M241.0 887.5h48.0M241.0 922.5h48.0M283.0 887.5h48.0M283.0 922.5h48.0M325.0 887.5h48.0M325.0 922.5h48.0M367.0 887.5h48.0M367.0 922.5h48.0M409.0 887.5h48.0M409.0 922.5h48.0M451.0 887.5h48.0M451.0 922.5h48.0M493.0 887.5h48.0M493.0 922.5h48.0M535.0 887.5h48.0M535.0 922.5h48.0M577.0 887.5h48.0M577.0 922.5h48.0M619.0 887.5h48.0M619.0 922.5h48.0M661.0 887.5h48.0M661.0 922.5h48.0" fill="none" stroke="#d9a030" stroke-width="1"/>
<path d="M31.5 415.5v35.0M78.5 415.5v35.0M73.5 415.5v35.0M120.5 415.5v35.0M115.5 415.5v35.0M162.5 415.5v35.0M157.5 415.5v35.0M204.5 415.5v35.0M199.5 415.5v35.0M246.5 415.5v35.0M241.5 415.5v35.0M288.5 415.5v35.0M283.5 415.5v35.0M330.5 415.5v35.0M325.5 415.5v35.0M372.5 415.5v35.0M367.5 415.5v35.0M414.5 415.5v35.0M409.5 415.5v35.0M456.5 415.5v35.0M451.5 415.5v35.0M498.5 415.5v35.0M493.5 415.5v35.0M540.5 415.5v35.0M535.5 415.5v35.0M582.5 415.5v35.0M577.5 415.5v35.0M624.5 415.5v35.0M619.5 415.5v35.0M666.5 415.5v35.0M661.5 415.5v35.0M708.5 415.5v35.0M31.5 446.5v35.0M78.5 446.5v35.0M73.5 446.5v35.0M120.5 446.5v35.0M115.5 446.5v35.0M162.5 446.5v35.0M157.5 446.5v35.0M204.5 446.5v35.0M199.5 446.5v35.0M246.5 446.5v35.0M241.5 446.5v35.0M288.5 446.5v35.0M283.5 446.5v35.0M330.5 446.5v35.0M325.5 446.5v35.0M372.5 446.5v35.0M367.5 446.5v35.0M414.5 446.5v35.0M409.5 446.5v35.0M456.5 446.5v35.0M451.5 446.5v35.0M498.5 446.5v35.0M493.5 446.5v35.0M540.5 446.5v35.0M535.5 446.5v35.0M582.5 446.5v35.0M577.5 446.5v35.0M624.5 446.5v35.0M619.5 446.5v35.0M666.5 446.5v35.0M661.5 446.5v35.0M708.5 446.5v35.0M31.5 478.5v35.0M78.5 478.5v35.0M73.5 478.5v35.0M120.5 478.5v35.0M115.5 478.5v35.0M162.5 478.5v35.0M157.5 478.5v35.0M204.5 478.5v35.0M199.5 478.5v35.0M246.5 478.5v35.0M241.5 478.5v35.0M288.5 478.5v35.0M283.5 478.5v35.0M330.5 478.5v35.0M325.5 478.5v35.0M372.5 478.5v35.0M367.5 478.5v35.0M414.5 478.5v35.0M409.5 478.5v35.0M456.5 478.5v35.0M451.5 478.5v35.0M498.5 478.5v35.0M493.5 478.5v35.0M540.5 478.5v35.0M535.5 478.5v35.0M582.5 478.5v35.0M577.5 478.5v35.0M624.5 478.5v35.0M619.5 478.5v35.0M666.5 478.5v35.0M661.5 478.5v35.0M708.5 478.5v35.0M31.5 509.5v35.0M78.5 509.5v35.0M73.5 509.5v35.0M120.5 509.5v35.0M115.5 509.5v35.0M162.5 509.5v35.0M157.5 509.5v35.0M204.5 509.5v35.0M199.5 509.5v35.0M246.5 509.5v35.0M241.5 509.5v35.0M288.5 509.5v35.0M283.5 509.5v35.0M330.5 509.5v35.0M325.5 509.5v35.0M372.5 509.5v35.0M367.5 509.5v35.0M414.5 509.5v35.0M409.5 509.5v35.0M456.5 509.5v35.0M451.5 509.5v35.0M498.5 509.5v35.0M493.5 509.5v35.0M540.5 509.5v35.0M535.5 509.5v35.0M582.5 509.5v35.0M577.5 509.5v35.0M624.5 509.5v35.0M619.5 509.5v35.0M666.5 509.5v35.0M661.5 509.5v35.0M708.5 509.5v35.0M31.5 541.5v35.0M78.5 541.5v35.0M73.5 541.5v35.0M120.5 541.5v35.0M115.5 541.5v35.0M162.5 541.5v35.0M157.5 541.5v35.0M204.5 541.5v35.0M199.5 541.5v35.0M246.5 541.5v35.0M241.5 541.5v35.0M288.5 541.5v35.0M283.5 541.5v35.0M330.5 541.5v35.0M325.5 541.5v35.0M372.5 541.5v35.0M367.5 541.5v35.0M414.5 541.5v35.0M409.5 541.5v35.0M456.5 541.5v35.0M451.5 541.5v35.0M498.5 541.5v35.0M493.5 541.5v35.0M540.5 541.5v35.0M535.5 541.5v35.0M582.5 541.5v35.0M577.5 541.5v35.0M624.5 541.5v35.0M619.5 541.5v35.0M666.5 541.5v35.0M661.5 541.5v35.0M708.5 541.5v35.0M31.5 572.5v35.0M78.5 572.5v35.0M73.5 572.5v35.0M120.5 572.5v35.0M115.5 572.5v35.0M162.5 572.5v35.0M157.5 572.5v35.0M204.5 572.5v35.0M199.5 572.5v35.0M246.5 572.5v35.0M241.5 572.5v35.0M288.5 572.5v35.0M283.5 572.5v35.0M330.5 572.5v35.0M325.5 572.5v35.0M372.5 572.5v35.0M367.5 572.5v35.0M414.5 572.5v35.0M409.5 572.5v35.0M456.5 572.5v35.0M451.5 572.5v35.0M498.5 572.5v35.0M493.5 572.5v35.0M540.5 572.5v35.0M535.5 572.5v35.0M582.5 572.5v35.0M577.5 572.5v35.0M624.5 572.5v35.0M619.5 572.5v35.0M666.5 572.5v35.0M661.5 572.5v35.0M708.5 572.5v35.0M31.5 604.5v35.0M78.5 604.5v35.0M73.5 604.5v35.0M120.5 604.5v35.0M115.5 604.5v35.0M162.5 604.5v35.0M157.5 604.5v35.0M204.5 604.5v35.0M199.5 604.5v35.0M246.5 604.5v35.0M241.5 604.5v35.0M288.5 604.5v35.0M283.5 604.5v35.0M330.5 604.5v35.0M325.5 604.5v35.0M372.5 604.5v35.0M367.5 604.5v35.0M414.5 604.5v35.0M409.5 604.5v35.0M456.5 604.5v35.0M451.5 604.5v35.0M498.5 604.5v35.0M493.5 604.5v35.0M540.5 604.5v35.0M535.5 604.5v35.0M582.5 604.5v35.0M577.5 604.5v35.0M624.5 604.5v35.0M619.5 604.5v35.0M666.5 604.5v35.0M661.5 604.5v35.0M708.5 604.5v35.0M31.5 635.5v35.0M78.5 635.5v35.0M73.5 635.5v35.0M120.5 635.5v35.0M115.5 635.5v35.0M162.5 635.5v35.0M157.5 635.5v35.0M204.5 635.5v35.0M199.5 635.5v35.0M246.5 635.5v35.0M241.5 635.5v35.0M288.5 635.5v35.0M283.5 635.5v35.0M330.5 635.5v35.0M325.5 635.5v35.0M372.5 635.5v35.0M367.5 635.5v35.0M414.5 635.5v35.0M409.5 635.5v35.0M456.5 635.5v35.0M451.5 635.5v35.0M498.5 635.5v35.0M493.5 635.5v35.0M540.5 635.5v35.0M535.5 635.5v35.0M582.5 635.5v35.0M577.5 635.5v35.0M624.5 635.5v35.0M619.5 635.5v35.0M666.5 635.5v35.0M661.5 635.5v35.0M708.5 635.5v35.0M31.5 667.5v35.0M78.5 667.5v35.0M73.5 667.5v35.0M120.5 667.5v35.0M115.5 667.5v35.0M162.5 667.5v35.0M157.5 667.5v35.0M204.5 667.5v35.0M199.5 667.5v35.0M246.5 667.5v35.0M241.5 667.5v35.0M288.5 667.5v35.0M283.5 667.5v35.0M330.5 667.5v35.0M325.5 667.5v35.0M372.5 667.5v35.0M367.5 667.5v35.0M414.5 667.5v35.0M409.5 667.5v35.0M456.5 667.5v35.0M451.5 667.5v35.0M498.5 667.5v35.0M493.5 667.5v35.0M540.5 667.5v35.0M535.5 667.5v35.0M582.5 667.5v35.0M577.5 667.5v35.0M624.5 667.5v35.0M619.5 667.5v35.0M666.5 667.5v35.0M661.5 667.5v35.0M708.5 667.5v35.0M31.5 698.5v35.0M78.5 698.5v35.0M73.5 698.5v35.0M120.5 698.5v35.0M115.5 698.5v35.0M162.5 698.5v35.0M157.5 698.5v35.0M204.5 698.5v35.0M199.5 698.5v35.0M246.5 698.5v35.0M241.5 698.5v35.0M288.5 698.5v35.0M283.5 698.5v35.0M330.5 698.5v35.0M325.5 698.5v35.0M372.5 698.5v35.0M367.5 698.5v35.0M414.5 698.5v35.0M409.5 698.5v35.0M456.5 698.5v35.0M451.5 698.5v35.0M498.5 698.5v35.0M493.5 698.5v35.0M540.5 698.5v35.0M535.5 698.5v35.0M582.5 698.5v35.0M577.5 698.5v35.0M624.5 698.5v35.0M619.5 698.5v35.0M666.5 698.5v35.0M661.5 698.5v35.0M708.5 698.5v35.0M31.5 730.5v35.0M78.5 730.5v35.0M73.5 730.5v35.0M120.5 730.5v35.0M115.5 730.5v35.0M162.5 730.5v35.0M157.5 730.5v35.0M204.5 730.5v35.0M199.5 730.5v35.0M246.5 730.5v35.0M241.5 730.5v35.0M288.5 730.5v35.0M283.5 730.5v35.0M330.5 730.5v35.0M325.5 730.5v35.0M372.5 730.5v35.0M367.5 730.5v35.0M414.5 730.5v35.0M409.5 730.5v35.0M456.5 730.5v35.0M451.5 730.5v35.0M498.5 730.5v35.0M493.5 730.5v35.0M540.5 730.5v35.0M535.5 730.5v35.0M582.5 730.5v35.0M577.5 730.5v35.0M624.5 730.5v35.0M619.5 730.5v35.0M666.5 730.5v35.0M661.5 730.5v35.0M708.5 730.5v35.0M31.5 761.5v35.0M78.5 761.5v35.0M73.5 761.5v35.0M120.5 761.5v35.0M115.5 761.5v35.0M162.5 761.5v35.0M157.5 761.5v35.0M204.5 761.5v35.0M199.5 761.5v35.0M246.5 761.5v35.0M241.5 761.5v35.0M288.5 761.5v35.0M283.5 761.5v35.0M330.5 761.5v35.0M325.5 761.5v35.0M372.5 761.5v35.0M367.5 761.5v35.0M414.5 761.5v35.0M409.5 761.5v35.0M456.5 761.5v35.0M451.5 761.5v35.0M498.5 761.5v35.0M493.5 761.5v35.0M540.5 761.5v35.0M535.5 761.5v35.0M582.5 761.5v35.0M577.5 761.5v35.0M624.5 761.5v35.0M619.5 761.5v35.0M666.5 761.5v35.0M661.5 761.5v35.0M708.5 761.5v35.0M31.5 793.5v35.0M78.5 793.5v35.0M73.5 793.5v35.0M120.5 793.5v35.0M115.5 793.5v35.0M162.5 793.5v35.0M157.5 793.5v35.0M204.5 793.5v35.0M199.5 793.5v35.0M246.5 793.5v35.0M241.5 793.5v35.0M288.5 793.5v35.0M283.5 793.5v35.0M330.5 793.5v35.0M325.5 793.5v35.0M372.5 793.5v35.0M367.5 793.5v35.0M414.5 793.5v35.0M409.5 793.5v35.0M456.5 793.5v35.0M451.5 793.5v35.0M498.5 793.5v35.0M493.5 793.5v35.0M540.5 793.5v35.0M535.5 793.5v35.0M582.5 793.5v35.0M577.5 793.5v35.0M624.5 793.5v35.0M619.5 793.5v35.0M666.5 793.5v35.0M661.5 793.5v35.0M708.5 793.5v35.0M31.5 824.5v35.0M78.5 824.5v35.0M73.5 824.5v35.0M120.5 824.5v35.0M115.5 824.5v35.0M162.5 824.5v35.0M157.5 824.5v35.0M204.5 824.5v35.0M199.5 824.5v35.0M246.5 824.5v35.0M241.5 824.5v35.0M288.5 824.5v35.0M283.5 824.5v35.0M330.5 824.5v35.0M325.5 824.5v35.0M372.5 824.5v35.0M367.5 824.5v35.0M414.5 824.5v35.0M409.5 824.5v35.0M456.5 824.5v35.0M451.5 824.5v35.0M498.5 824.5v35.0M493.5 824.5v35.0M540.5 824.5v35.0M535.5 824.5v35.0M582.5 824.5v35.0M577.5 824.5v35.0M624.5 824.5v35.0M619.5 824.5v35.0M666.5 824.5v35.0M661.5 824.5v35.0M708.5 824.5v35.0M31.5 856.5v35.0M78.5 856.5v35.0M73.5 856.5v35.0M120.5 856.5v35.0M115.5 856.5v35.0M162.5 856.5v35.0M157.5 856.5v35.0M204.5 856.5v35.0M199.5 856.5v35.0M246.5 856.5v35.0M241.5 856.5v35.0M288.5 856.5v35.0M283.5 856.5v35.0M330.5 856.5v35.0M325.5 856.5v35.0M372.5 856.5v35.0M367.5 856.5v35.0M414.5 856.5v35.0M409.5 856.5v35.0M456.5 856.5v35.0M451.5 856.5v35.0M498.5 856.5v35.0M493.5 856.5v35.0M540.5 856.5v35.0M535.5 856.5v35.0M582.5 856.5v35.0M577.5 856.5v35.0M624.5 856.5v35.0M619.5 856.5v35.0M666.5 856.5v35.0M661.5 856.5v35.0M708.5 856.5v35.0M31.5 887.5v35.0M78.5 887.5v35.0M73.5 887.5v35.0M120.5 887.5v35.0M115.5 887.5v35.0M162.5 887.5v35.0M157.5 887.5v35.0M204.5 887.5v35.0M199.5 887.5v35.0M246.5 887.5v35.0M241.5 887.5v35.0M288.5 887.5v35.0M283.5 887.5v35.0M330.5 887.5v35.0M325.5 887.5v35.0M372.5 887.5v35.0M367.5 887.5v35.0M414.5 887.5v35.0M409.5 887.5v35.0M456.5 887.5v35.0M451.5 887.5v35.0M498.5 887.5v35.0M493.5 887.5v35.0M540.5 887.5v35.0M535.5 887.5v35.0M582.5 887.5v35.0M577.5 887.5v35.0M624.5 887.5v35.0M619.5 887.5v35.0M666.5 887.5v35.0M661.5 887.5v35.0M708.5 887.5v35.0" fill="none" stroke="#e9b236" stroke-width="1"/>
<path d="M52.7 920V428.2H684" fill="none" stroke="#98b8c8" stroke-width="1.3"/>
<path d="M223.0 432.2L811.0 432.2M181.0 463.7L811.0 463.7M139.0 495.2L811.0 495.2M97.0 526.7L811.0 526.7M55.0 558.2L811.0 558.2M55.0 589.7L811.0 589.7M55.0 621.2L811.0 621.2M55.0 652.7L811.0 652.7M55.0 684.2L811.0 684.2M55.0 715.7L811.0 715.7M55.0 747.2L811.0 747.2M55.0 778.7L811.0 778.7M55.0 810.2L811.0 810.2M55.0 841.7L811.0 841.7M55.0 873.2L811.0 873.2M55.0 904.7L811.0 904.7M181.0 463.7L139.0 495.2M97.0 526.7L55.0 558.2M53.8 589.7L53.8 621.2M53.8 652.7L53.8 684.2M53.8 715.7L53.8 747.2M53.8 778.7L53.8 810.2M53.8 841.7L53.8 873.2M53.8 904.7L53.8 936.2" fill="none" stroke="#33cf3f" stroke-width="1.4"/>
<path d="M259.2 427.9L265.6 432.2L259.2 436.5zM301.2 427.9L307.6 432.2L301.2 436.5zM343.2 427.9L349.6 432.2L343.2 436.5zM385.2 427.9L391.6 432.2L385.2 436.5zM427.2 427.9L433.6 432.2L427.2 436.5zM469.2 427.9L475.6 432.2L469.2 436.5zM511.2 427.9L517.6 432.2L511.2 436.5zM553.2 427.9L559.6 432.2L553.2 436.5zM595.2 427.9L601.6 432.2L595.2 436.5zM637.2 427.9L643.6 432.2L637.2 436.5zM679.2 427.9L685.6 432.2L679.2 436.5zM178.2 463.7L185.5 459.4L185.5 468.0zM220.2 463.7L227.5 459.4L227.5 468.0zM262.2 463.7L269.5 459.4L269.5 468.0zM304.2 463.7L311.5 459.4L311.5 468.0zM346.2 463.7L353.5 459.4L353.5 468.0zM388.2 463.7L395.5 459.4L395.5 468.0zM430.2 463.7L437.5 459.4L437.5 468.0zM472.2 463.7L479.5 459.4L479.5 468.0zM514.2 463.7L521.5 459.4L521.5 468.0zM556.2 463.7L563.5 459.4L563.5 468.0zM598.2 463.7L605.5 459.4L605.5 468.0zM640.2 463.7L647.5 459.4L647.5 468.0zM682.2 463.7L689.5 459.4L689.5 468.0zM136.0 498.2L144.0 494.2L140.0 490.2zM175.2 490.9L181.6 495.2L175.2 499.5zM217.2 490.9L223.6 495.2L217.2 499.5zM259.2 490.9L265.6 495.2L259.2 499.5zM301.2 490.9L307.6 495.2L301.2 499.5zM343.2 490.9L349.6 495.2L343.2 499.5zM385.2 490.9L391.6 495.2L385.2 499.5zM427.2 490.9L433.6 495.2L427.2 499.5zM469.2 490.9L475.6 495.2L469.2 499.5zM511.2 490.9L517.6 495.2L511.2 499.5zM553.2 490.9L559.6 495.2L553.2 499.5zM595.2 490.9L601.6 495.2L595.2 499.5zM637.2 490.9L643.6 495.2L637.2 499.5zM679.2 490.9L685.6 495.2L679.2 499.5zM94.2 526.7L101.5 522.4L101.5 531.0zM136.2 526.7L143.5 522.4L143.5 531.0zM178.2 526.7L185.5 522.4L185.5 531.0zM220.2 526.7L227.5 522.4L227.5 531.0zM262.2 526.7L269.5 522.4L269.5 531.0zM304.2 526.7L311.5 522.4L311.5 531.0zM346.2 526.7L353.5 522.4L353.5 531.0zM388.2 526.7L395.5 522.4L395.5 531.0zM430.2 526.7L437.5 522.4L437.5 531.0zM472.2 526.7L479.5 522.4L479.5 531.0zM514.2 526.7L521.5 522.4L521.5 531.0zM556.2 526.7L563.5 522.4L563.5 531.0zM598.2 526.7L605.5 522.4L605.5 531.0zM640.2 526.7L647.5 522.4L647.5 531.0zM682.2 526.7L689.5 522.4L689.5 531.0zM52.0 561.2L60.0 557.2L56.0 553.2zM91.2 553.9L97.6 558.2L91.2 562.5zM133.2 553.9L139.6 558.2L133.2 562.5zM175.2 553.9L181.6 558.2L175.2 562.5zM217.2 553.9L223.6 558.2L217.2 562.5zM259.2 553.9L265.6 558.2L259.2 562.5zM301.2 553.9L307.6 558.2L301.2 562.5zM343.2 553.9L349.6 558.2L343.2 562.5zM385.2 553.9L391.6 558.2L385.2 562.5zM427.2 553.9L433.6 558.2L427.2 562.5zM469.2 553.9L475.6 558.2L469.2 562.5zM511.2 553.9L517.6 558.2L511.2 562.5zM553.2 553.9L559.6 558.2L553.2 562.5zM595.2 553.9L601.6 558.2L595.2 562.5zM637.2 553.9L643.6 558.2L637.2 562.5zM679.2 553.9L685.6 558.2L679.2 562.5zM52.2 589.7L59.5 585.4L59.5 594.0zM94.2 589.7L101.5 585.4L101.5 594.0zM136.2 589.7L143.5 585.4L143.5 594.0zM178.2 589.7L185.5 585.4L185.5 594.0zM220.2 589.7L227.5 585.4L227.5 594.0zM262.2 589.7L269.5 585.4L269.5 594.0zM304.2 589.7L311.5 585.4L311.5 594.0zM346.2 589.7L353.5 585.4L353.5 594.0zM388.2 589.7L395.5 585.4L395.5 594.0zM430.2 589.7L437.5 585.4L437.5 594.0zM472.2 589.7L479.5 585.4L479.5 594.0zM514.2 589.7L521.5 585.4L521.5 594.0zM556.2 589.7L563.5 585.4L563.5 594.0zM598.2 589.7L605.5 585.4L605.5 594.0zM640.2 589.7L647.5 585.4L647.5 594.0zM682.2 589.7L689.5 585.4L689.5 594.0zM50.0 617.2L59.0 617.2L54.5 623.2zM91.2 616.9L97.6 621.2L91.2 625.5zM133.2 616.9L139.6 621.2L133.2 625.5zM175.2 616.9L181.6 621.2L175.2 625.5zM217.2 616.9L223.6 621.2L217.2 625.5zM259.2 616.9L265.6 621.2L259.2 625.5zM301.2 616.9L307.6 621.2L301.2 625.5zM343.2 616.9L349.6 621.2L343.2 625.5zM385.2 616.9L391.6 621.2L385.2 625.5zM427.2 616.9L433.6 621.2L427.2 625.5zM469.2 616.9L475.6 621.2L469.2 625.5zM511.2 616.9L517.6 621.2L511.2 625.5zM553.2 616.9L559.6 621.2L553.2 625.5zM595.2 616.9L601.6 621.2L595.2 625.5zM637.2 616.9L643.6 621.2L637.2 625.5zM679.2 616.9L685.6 621.2L679.2 625.5zM52.2 652.7L59.5 648.4L59.5 657.0zM94.2 652.7L101.5 648.4L101.5 657.0zM136.2 652.7L143.5 648.4L143.5 657.0zM178.2 652.7L185.5 648.4L185.5 657.0zM220.2 652.7L227.5 648.4L227.5 657.0zM262.2 652.7L269.5 648.4L269.5 657.0zM304.2 652.7L311.5 648.4L311.5 657.0zM346.2 652.7L353.5 648.4L353.5 657.0zM388.2 652.7L395.5 648.4L395.5 657.0zM430.2 652.7L437.5 648.4L437.5 657.0zM472.2 652.7L479.5 648.4L479.5 657.0zM514.2 652.7L521.5 648.4L521.5 657.0zM556.2 652.7L563.5 648.4L563.5 657.0zM598.2 652.7L605.5 648.4L605.5 657.0zM640.2 652.7L647.5 648.4L647.5 657.0zM682.2 652.7L689.5 648.4L689.5 657.0zM50.0 680.2L59.0 680.2L54.5 686.2zM91.2 679.9L97.6 684.2L91.2 688.5zM133.2 679.9L139.6 684.2L133.2 688.5zM175.2 679.9L181.6 684.2L175.2 688.5zM217.2 679.9L223.6 684.2L217.2 688.5zM259.2 679.9L265.6 684.2L259.2 688.5zM301.2 679.9L307.6 684.2L301.2 688.5zM343.2 679.9L349.6 684.2L343.2 688.5zM385.2 679.9L391.6 684.2L385.2 688.5zM427.2 679.9L433.6 684.2L427.2 688.5zM469.2 679.9L475.6 684.2L469.2 688.5zM511.2 679.9L517.6 684.2L511.2 688.5zM553.2 679.9L559.6 684.2L553.2 688.5zM595.2 679.9L601.6 684.2L595.2 688.5zM637.2 679.9L643.6 684.2L637.2 688.5zM679.2 679.9L685.6 684.2L679.2 688.5zM52.2 715.7L59.5 711.4L59.5 720.0zM94.2 715.7L101.5 711.4L101.5 720.0zM136.2 715.7L143.5 711.4L143.5 720.0zM178.2 715.7L185.5 711.4L185.5 720.0zM220.2 715.7L227.5 711.4L227.5 720.0zM262.2 715.7L269.5 711.4L269.5 720.0zM304.2 715.7L311.5 711.4L311.5 720.0zM346.2 715.7L353.5 711.4L353.5 720.0zM388.2 715.7L395.5 711.4L395.5 720.0zM430.2 715.7L437.5 711.4L437.5 720.0zM472.2 715.7L479.5 711.4L479.5 720.0zM514.2 715.7L521.5 711.4L521.5 720.0zM556.2 715.7L563.5 711.4L563.5 720.0zM598.2 715.7L605.5 711.4L605.5 720.0zM640.2 715.7L647.5 711.4L647.5 720.0zM682.2 715.7L689.5 711.4L689.5 720.0zM50.0 743.2L59.0 743.2L54.5 749.2zM91.2 742.9L97.6 747.2L91.2 751.5zM133.2 742.9L139.6 747.2L133.2 751.5zM175.2 742.9L181.6 747.2L175.2 751.5zM217.2 742.9L223.6 747.2L217.2 751.5zM259.2 742.9L265.6 747.2L259.2 751.5zM301.2 742.9L307.6 747.2L301.2 751.5zM343.2 742.9L349.6 747.2L343.2 751.5zM385.2 742.9L391.6 747.2L385.2 751.5zM427.2 742.9L433.6 747.2L427.2 751.5zM469.2 742.9L475.6 747.2L469.2 751.5zM511.2 742.9L517.6 747.2L511.2 751.5zM553.2 742.9L559.6 747.2L553.2 751.5zM595.2 742.9L601.6 747.2L595.2 751.5zM637.2 742.9L643.6 747.2L637.2 751.5zM679.2 742.9L685.6 747.2L679.2 751.5zM52.2 778.7L59.5 774.4L59.5 783.0zM94.2 778.7L101.5 774.4L101.5 783.0zM136.2 778.7L143.5 774.4L143.5 783.0zM178.2 778.7L185.5 774.4L185.5 783.0zM220.2 778.7L227.5 774.4L227.5 783.0zM262.2 778.7L269.5 774.4L269.5 783.0zM304.2 778.7L311.5 774.4L311.5 783.0zM346.2 778.7L353.5 774.4L353.5 783.0zM388.2 778.7L395.5 774.4L395.5 783.0zM430.2 778.7L437.5 774.4L437.5 783.0zM472.2 778.7L479.5 774.4L479.5 783.0zM514.2 778.7L521.5 774.4L521.5 783.0zM556.2 778.7L563.5 774.4L563.5 783.0zM598.2 778.7L605.5 774.4L605.5 783.0zM640.2 778.7L647.5 774.4L647.5 783.0zM682.2 778.7L689.5 774.4L689.5 783.0zM50.0 806.2L59.0 806.2L54.5 812.2zM91.2 805.9L97.6 810.2L91.2 814.5zM133.2 805.9L139.6 810.2L133.2 814.5zM175.2 805.9L181.6 810.2L175.2 814.5zM217.2 805.9L223.6 810.2L217.2 814.5zM259.2 805.9L265.6 810.2L259.2 814.5zM301.2 805.9L307.6 810.2L301.2 814.5zM343.2 805.9L349.6 810.2L343.2 814.5zM385.2 805.9L391.6 810.2L385.2 814.5zM427.2 805.9L433.6 810.2L427.2 814.5zM469.2 805.9L475.6 810.2L469.2 814.5zM511.2 805.9L517.6 810.2L511.2 814.5zM553.2 805.9L559.6 810.2L553.2 814.5zM595.2 805.9L601.6 810.2L595.2 814.5zM637.2 805.9L643.6 810.2L637.2 814.5zM679.2 805.9L685.6 810.2L679.2 814.5zM52.2 841.7L59.5 837.4L59.5 846.0zM94.2 841.7L101.5 837.4L101.5 846.0zM136.2 841.7L143.5 837.4L143.5 846.0zM178.2 841.7L185.5 837.4L185.5 846.0zM220.2 841.7L227.5 837.4L227.5 846.0zM262.2 841.7L269.5 837.4L269.5 846.0zM304.2 841.7L311.5 837.4L311.5 846.0zM346.2 841.7L353.5 837.4L353.5 846.0zM388.2 841.7L395.5 837.4L395.5 846.0zM430.2 841.7L437.5 837.4L437.5 846.0zM472.2 841.7L479.5 837.4L479.5 846.0zM514.2 841.7L521.5 837.4L521.5 846.0zM556.2 841.7L563.5 837.4L563.5 846.0zM598.2 841.7L605.5 837.4L605.5 846.0zM640.2 841.7L647.5 837.4L647.5 846.0zM682.2 841.7L689.5 837.4L689.5 846.0zM50.0 869.2L59.0 869.2L54.5 875.2zM91.2 868.9L97.6 873.2L91.2 877.5zM133.2 868.9L139.6 873.2L133.2 877.5zM175.2 868.9L181.6 873.2L175.2 877.5zM217.2 868.9L223.6 873.2L217.2 877.5zM259.2 868.9L265.6 873.2L259.2 877.5zM301.2 868.9L307.6 873.2L301.2 877.5zM343.2 868.9L349.6 873.2L343.2 877.5zM385.2 868.9L391.6 873.2L385.2 877.5zM427.2 868.9L433.6 873.2L427.2 877.5zM469.2 868.9L475.6 873.2L469.2 877.5zM511.2 868.9L517.6 873.2L511.2 877.5zM553.2 868.9L559.6 873.2L553.2 877.5zM595.2 868.9L601.6 873.2L595.2 877.5zM637.2 868.9L643.6 873.2L637.2 877.5zM679.2 868.9L685.6 873.2L679.2 877.5zM52.2 904.7L59.5 900.4L59.5 909.0zM94.2 904.7L101.5 900.4L101.5 909.0zM136.2 904.7L143.5 900.4L143.5 909.0zM178.2 904.7L185.5 900.4L185.5 909.0zM220.2 904.7L227.5 900.4L227.5 909.0zM262.2 904.7L269.5 900.4L269.5 909.0zM304.2 904.7L311.5 900.4L311.5 909.0zM346.2 904.7L353.5 900.4L353.5 909.0zM388.2 904.7L395.5 900.4L395.5 909.0zM430.2 904.7L437.5 900.4L437.5 909.0zM472.2 904.7L479.5 900.4L479.5 909.0zM514.2 904.7L521.5 900.4L521.5 909.0zM556.2 904.7L563.5 900.4L563.5 909.0zM598.2 904.7L605.5 900.4L605.5 909.0zM640.2 904.7L647.5 900.4L647.5 909.0zM682.2 904.7L689.5 900.4L689.5 909.0z" fill="#33cf3f" stroke="#33cf3f" stroke-width="0.4" stroke-linejoin="round"/>
<circle cx="222.2" cy="432.2" r="2.6" fill="#33cf3f"/>
<path d="M214.0 459.6V455.8H217.8M226.2 455.8H230.0V459.6M230.0 465.79999999999995V469.59999999999997H226.2M217.8 469.59999999999997H214.0V465.79999999999995M466.0 459.6V455.8H469.8M478.2 455.8H482.0V459.6M482.0 465.79999999999995V469.59999999999997H478.2M469.8 469.59999999999997H466.0V465.79999999999995M466.0 522.6V518.8000000000001H469.8M478.2 518.8000000000001H482.0V522.6M482.0 528.8000000000001V532.6H478.2M469.8 532.6H466.0V528.8000000000001M466.0 585.6V581.8000000000001H469.8M478.2 581.8000000000001H482.0V585.6M482.0 591.8000000000001V595.6H478.2M469.8 595.6H466.0V591.8000000000001M466.0 648.6V644.8000000000001H469.8M478.2 644.8000000000001H482.0V648.6M482.0 654.8000000000001V658.6H478.2M469.8 658.6H466.0V654.8000000000001M466.0 711.6V707.8000000000001H469.8M478.2 707.8000000000001H482.0V711.6M482.0 717.8000000000001V721.6H478.2M469.8 721.6H466.0V717.8000000000001M466.0 774.6V770.8000000000001H469.8M478.2 770.8000000000001H482.0V774.6M482.0 780.8000000000001V784.6H478.2M469.8 784.6H466.0V780.8000000000001M466.0 837.6V833.8000000000001H469.8M478.2 833.8000000000001H482.0V837.6M482.0 843.8000000000001V847.6H478.2M469.8 847.6H466.0V843.8000000000001M466.0 900.6V896.8000000000001H469.8M478.2 896.8000000000001H482.0V900.6M482.0 906.8000000000001V910.6H478.2M469.8 910.6H466.0V906.8000000000001" fill="none" stroke="#f2f2e8" stroke-width="1.9"/>
</svg>
<div class="a" style="left:11px;top:393px;width:663px;height:1px;background:#121212"></div>
<!-- v scrollbar -->
<div class="a" style="left:674px;top:394px;width:17px;height:516px;background:#3c3c3c"></div>
<div class="a" style="left:679px;top:411px;width:7px;height:96px;background:#8c8c8c;border-radius:4px"></div>
<!-- h scrollbar -->
<div class="a" style="left:11px;top:910px;width:663px;height:15px;background:#3c3c3c"></div>
<div class="a" style="left:29px;top:915px;width:162px;height:6px;background:#8c8c8c;border-radius:3px"></div>
<div class="a" style="left:674px;top:910px;width:17px;height:15px;background:#000"></div>
<svg class="a" style="left:674px;top:394px" width="17" height="516"><path d="M5 12H12L8.5 6Z" fill="#9a9a9a"/><path d="M5 504H12L8.5 509.5Z" fill="#8c8c8c"/></svg>
<svg class="a" style="left:11px;top:910px" width="663" height="15"><path d="M12 4V11L6.5 7.5Z" fill="#8c8c8c"/><path d="M651 4V11L656.5 7.5Z" fill="#8c8c8c"/></svg>

<div class="t" style="left:11.00px;top:935.5px;font-size:13.6px;font-style:italic;color:#cfcfcf;transform:scaleX(1.0198);transform-origin:0 0">Click on tile to select it. &lt;Ctrl&gt;+click to select multiple tiles. &lt;Shift&gt;+click to select rectangular area by two</div>
<div class="t" style="left:11.00px;top:955px;font-size:13.6px;font-style:italic;color:#cfcfcf;transform:scaleX(0.9797);transform-origin:0 0">opposite corners.</div>
<div class="a" style="left:12px;top:987px;width:10px;height:10px;background:#707070"></div>
<div class="t" style="left:26.66px;top:987px;font-size:13.5px;transform:scaleX(1.0449);transform-origin:0 0">Move stage to position when tile is clicked</div>
<div class="t" style="left:515.60px;top:987px;font-size:13.5px;color:#7cc63a;transform:scaleX(1.0210);transform-origin:0 0">Clicked tile row: 2, column: 7</div>

<!-- RIGHT PANEL -->
<div class="a" style="left:704px;top:31px;width:7px;height:980px;background:#1a1a1a"></div><div class="a" style="left:706px;top:31px;width:1px;height:980px;background:#141414"></div>
<div class="a" style="left:711px;top:31px;width:300px;height:300px;background:#2d2d2d"></div>
<div class="t" style="left:717.00px;top:42px;font-size:20px;color:#1c7bd0;transform:scaleX(0.8846);transform-origin:0 0">X</div>
<div class="t" style="left:717.00px;top:72px;font-size:20px;color:#1c7bd0;transform:scaleX(0.8846);transform-origin:0 0">Y</div>
<div class="t" style="left:717.50px;top:102px;font-size:20px;color:#1c7bd0;transform:scaleX(0.8750);transform-origin:0 0">Z</div>
<div class="t" style="left:705px;top:42px;width:100px;text-align:right;font-size:20px;color:#fff;transform:scaleX(0.9492);transform-origin:100% 0">10.649</div>
<div class="t" style="left:705px;top:72px;width:100px;text-align:right;font-size:20px;color:#fff;transform:scaleX(0.9674);transform-origin:100% 0">-10.467</div>
<div class="t" style="left:705px;top:102px;width:100px;text-align:right;font-size:20px;color:#fff;transform:scaleX(0.9474);transform-origin:100% 0">4.868</div>
<div class="a" style="left:816px;top:36px;width:90px;height:90px;background:#6b6b6b"></div>
<div class="a" style="left:716px;top:136px;width:90px;height:90px;background:#6b6b6b"></div>
<div class="a" style="left:816px;top:136px;width:90px;height:90px;background:#6b6b6b"></div>
<div class="a" style="left:916px;top:136px;width:90px;height:90px;background:#6b6b6b"></div>
<div class="a" style="left:816px;top:236px;width:90px;height:90px;background:#6b6b6b"></div>
<svg class="a" style="left:711px;top:31px" width="298" height="300" viewBox="711 31 298 300">
 <path d="M844 90.2L861 73.6L878.3 90.2" fill="none" stroke="#fff" stroke-width="4.5" stroke-linecap="round" stroke-linejoin="round"/>
 <path d="M770.4 164L751.7 181.3L770.4 198.7" fill="none" stroke="#fff" stroke-width="4.5" stroke-linecap="round" stroke-linejoin="round"/>
 <path d="M952 164L970.7 181.3L952 198.7" fill="none" stroke="#fff" stroke-width="4.5" stroke-linecap="round" stroke-linejoin="round"/>
 <path d="M844 272.6L861 289.2L878.3 272.6" fill="none" stroke="#fff" stroke-width="4.5" stroke-linecap="round" stroke-linejoin="round"/>
 <rect x="842" y="162.3" width="38.3" height="38.3" rx="3" fill="none" stroke="#86d983" stroke-width="3"/>
 <path d="M937 102.5A27.9 27.9 0 1 1 984.6 102.5Z" fill="none" stroke="#1c86e0" stroke-width="3.4" stroke-linejoin="round"/>
 <path d="M960.7 68V86" stroke="#1c86e0" stroke-width="3" stroke-linecap="round"/>
 <circle cx="960.7" cy="91.2" r="5.2" fill="none" stroke="#1c86e0" stroke-width="2.8"/>
 <circle cx="940.7" cy="87.7" r="2.6" fill="#1c86e0"/><circle cx="946.9" cy="73.9" r="2.6" fill="#1c86e0"/>
 <circle cx="974.5" cy="73.9" r="2.6" fill="#1c86e0"/><circle cx="980.5" cy="87.7" r="2.6" fill="#1c86e0"/>
 <path d="M735.5 279L761 259.5L786.5 279" fill="none" stroke="#fff" stroke-width="4" stroke-linecap="round" stroke-linejoin="round"/>
 <path d="M743 273V302.3H756V288H766V302.3H779.5V273" fill="none" stroke="#fff" stroke-width="4" stroke-linejoin="miter"/>
 <path d="M948.9 251.2H974.1L991.9 269V294L974.1 311.6H948.9L931.1 294V269Z" fill="none" stroke="#ea3a30" stroke-width="4"/>
</svg>
<div class="t" style="left:940.00px;top:273px;font-size:18px;color:#fff;transform:scaleX(0.8423);transform-origin:0 0">STOP</div>

<!-- toolbar icons -->
<svg class="a" style="left:711px;top:331px" width="298" height="50" viewBox="711 331 298 50">
 <path d="M724.7 346H737L744.1 353V371H724.7Z" fill="#fbfbfb"/><path d="M737 346.5V353.2H744" fill="#e8e8e8" stroke="#2a2a2a" stroke-width="1"/>
 <path d="M759.3 347H777.5L782.1 351.5V369.9H759.3Z" fill="#1d7fd6"/>
 <rect x="763.6" y="351.4" width="11" height="5" fill="#1a1a1a"/><rect x="768.6" y="351.4" width="1" height="5" fill="#1d7fd6"/>
 <circle cx="770.2" cy="362.8" r="2.3" fill="#1a1a1a"/>
 <path d="M795.7 366V352H802L804 354.5H814.2V359H799.5L795.7 366Z" fill="#f5c400"/>
 <path d="M795.7 366L799.5 359H818L814.2 366Z" fill="#f5c400"/>
 <rect x="842" y="346" width="1" height="25" fill="#363636"/>
 <rect x="872.7" y="345.9" width="4.2" height="7" rx="1.6" fill="#82d684"/><rect x="882" y="345.9" width="4.2" height="7" rx="1.6" fill="#82d684"/>
 <path d="M869.6 353.8H889.3L888 357.5Q886 364 881.4 366V370.8H877.6V366Q873 364 870.9 357.5Z" fill="#82d684" stroke="#82d684" stroke-width="0.6" stroke-linejoin="round"/>
 <path d="M915.75 345.9C921 345.9 924.9 350 924.9 355.2C924.9 358.5 923 361 920.1 363.5V365H911.4V363.5C908.5 361 906.6 358.5 906.6 355.2C906.6 350 910.5 345.9 915.75 345.9Z" fill="#82d684"/>
 <rect x="912" y="366" width="8" height="5" rx="1.5" fill="#82d684"/>
 <path d="M911.6 354Q912 350.8 915 350" fill="none" stroke="#1e1e1e" stroke-width="1.1"/>
 <path d="M951.8 349.8V367.2M943.4 358.3H960.5" stroke="#e2e2e2" stroke-width="5" stroke-linecap="round"/>
 <path d="M976.8 352.1H982L983 349H993L994.1 352.1H1000V368.4H976.8Z" fill="#f7cb00"/>
 <circle cx="988.3" cy="359.7" r="4.4" fill="none" stroke="#2a2200" stroke-width="1.1"/>
</svg>
<!-- program header -->
<div class="a" style="left:709px;top:381px;width:302px;height:25px;border:1px solid #8a8a8a;border-right:none;background:#2a2a2a"></div>
<div class="t" style="left:715.06px;top:387px;font-size:13px;transform:scaleX(0.9371);transform-origin:0 0">Program</div>
<div class="t" style="left:768.00px;top:387px;font-size:13px;color:#c8c8c8;transform:scaleX(0.8678);transform-origin:0 0">Solar Cell</div>
<svg class="a" style="left:996.5px;top:386px" width="12" height="14" viewBox="0 0 12 14"><path d="M1 2L6 6L11 2M1 7L6 11L11 7" fill="none" stroke="#777" stroke-width="1.3"/></svg>
<svg class="a" style="left:716px;top:412px" width="10" height="13" viewBox="0 0 10 13"><path d="M2.4 1.6L8.2 6.5L2.4 11.4Z" fill="none" stroke="#f4f4f4" stroke-width="2.1" stroke-linejoin="round"/></svg>
<div class="t" style="left:730.57px;top:412px;font-size:13px;transform:scaleX(0.9274);transform-origin:0 0">Microscope</div>
<div class="a" style="left:711px;top:431px;width:300px;height:1px;background:#c4c4c4"></div>
<svg class="a" style="left:716px;top:438px" width="10" height="13" viewBox="0 0 10 13"><path d="M2.4 1.6L8.2 6.5L2.4 11.4Z" fill="none" stroke="#f4f4f4" stroke-width="2.1" stroke-linejoin="round"/></svg>
<div class="t" style="left:730.54px;top:438px;font-size:13px;transform:scaleX(0.9592);transform-origin:0 0">Lighting</div>
<div class="a" style="left:711px;top:457px;width:300px;height:1px;background:#c4c4c4"></div>
<svg class="a" style="left:716px;top:464px" width="10" height="13" viewBox="0 0 10 13"><path d="M2.4 1.6L8.2 6.5L2.4 11.4Z" fill="none" stroke="#f4f4f4" stroke-width="2.1" stroke-linejoin="round"/></svg>
<div class="t" style="left:731.50px;top:464px;font-size:13px;transform:scaleX(0.9157);transform-origin:0 0">Autofocus</div>
<div class="a" style="left:711px;top:483px;width:300px;height:1px;background:#c4c4c4"></div>
<svg class="a" style="left:716px;top:490px" width="10" height="13" viewBox="0 0 10 13"><path d="M2.4 1.6L8.2 6.5L2.4 11.4Z" fill="none" stroke="#f4f4f4" stroke-width="2.1" stroke-linejoin="round"/></svg>
<div class="t" style="left:730.56px;top:490px;font-size:13px;transform:scaleX(0.9376);transform-origin:0 0">Depth Composition</div>
<div class="a" style="left:711px;top:509px;width:300px;height:1px;background:#c4c4c4"></div>
<svg class="a" style="left:716px;top:516px" width="10" height="13" viewBox="0 0 10 13"><path d="M2.4 1.6L8.2 6.5L2.4 11.4Z" fill="none" stroke="#f4f4f4" stroke-width="2.1" stroke-linejoin="round"/></svg>
<div class="t" style="left:731.50px;top:516px;font-size:13px;transform:scaleX(0.8650);transform-origin:0 0">General</div>
<div class="a" style="left:711px;top:535px;width:300px;height:1px;background:#c4c4c4"></div>
<svg class="a" style="left:716px;top:542px" width="10" height="13" viewBox="0 0 10 13"><path d="M2.4 1.6L8.2 6.5L2.4 11.4Z" fill="none" stroke="#f4f4f4" stroke-width="2.1" stroke-linejoin="round"/></svg>
<div class="t" style="left:730.61px;top:542px;font-size:13px;transform:scaleX(0.8937);transform-origin:0 0">Positions List</div>
<div class="a" style="left:711px;top:561px;width:300px;height:1px;background:#c4c4c4"></div>
<svg class="a" style="left:716px;top:568px" width="10" height="13" viewBox="0 0 10 13"><path d="M2.4 1.6L8.2 6.5L2.4 11.4Z" fill="none" stroke="#f4f4f4" stroke-width="2.1" stroke-linejoin="round"/></svg>
<div class="t" style="left:730.63px;top:568px;font-size:13px;transform:scaleX(0.8654);transform-origin:0 0">References</div>
<div class="a" style="left:711px;top:587px;width:300px;height:1px;background:#c4c4c4"></div>
<svg class="a" style="left:716px;top:594px" width="10" height="13" viewBox="0 0 10 13"><path d="M2.4 1.6L8.2 6.5L2.4 11.4Z" fill="none" stroke="#f4f4f4" stroke-width="2.1" stroke-linejoin="round"/></svg>
<div class="t" style="left:731.50px;top:594px;font-size:13px;transform:scaleX(0.9208);transform-origin:0 0">Stitching</div>
<div class="a" style="left:711px;top:613px;width:300px;height:1px;background:#c4c4c4"></div>
<svg class="a" style="left:703px;top:517px" width="6" height="10"><path d="M1 1L5 5L1 9" fill="none" stroke="#777" stroke-width="1.2"/></svg>

<!-- bottom nav -->
<div class="a" style="left:723px;top:913px;width:19px;height:18px;background:#dadada;border-radius:2px"></div>
<svg class="a" style="left:723px;top:913px" width="19" height="18"><path d="M12.2 3.5L6.2 9L12.2 14.5" fill="none" stroke="#151515" stroke-width="2.6"/></svg>
<div class="a" style="left:795px;top:910px;width:18px;height:25px;border:1px solid #8a8a8a"></div>
<div class="t" style="left:798.5px;top:915px;font-size:17px;color:#fff">1</div>
<div class="a" style="left:909px;top:910px;width:18px;height:25px;border:1px solid #8a8a8a"></div>
<div class="t" style="left:912.5px;top:915px;font-size:17px;color:#fff">1</div>
<div class="a" style="left:981px;top:913px;width:19px;height:18px;background:#dadada;border-radius:2px"></div>
<svg class="a" style="left:981px;top:913px" width="19" height="18"><path d="M6.8 3.5L12.8 9L6.8 14.5" fill="none" stroke="#151515" stroke-width="2.6"/></svg>
<div class="a" style="left:711px;top:956px;width:300px;height:46px;background:#2d2d2d"></div>
<svg class="a" style="left:750px;top:966px" width="30" height="30"><path d="M5 4L24 14.5L5 25Z" fill="#70cf72" stroke="#70cf72" stroke-width="2" stroke-linejoin="round"/></svg>
<div class="a" style="left:851px;top:971px;width:21px;height:19px;background:#f03a2e;border-radius:2px"></div>
<div class="t" style="left:914.50px;top:973px;font-size:15px;color:#fff;transform:scaleX(1.0032);transform-origin:0 0">00h 00m 00s</div>
<div class="a" style="left:711px;top:1006px;width:300px;height:6px;background:#e2e2e2"></div>
</body></html>
